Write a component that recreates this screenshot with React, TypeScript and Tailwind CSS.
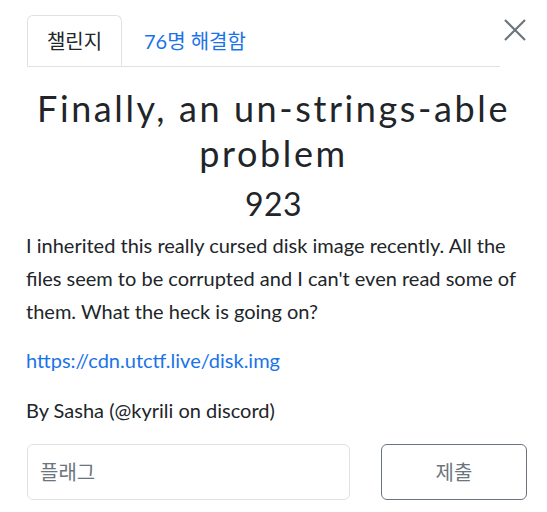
import React from "react";

const font = { fontFamily: "Lato, 'Noto Sans CJK KR', sans-serif" };

export default function App() {
  return (
    <div className="w-[547px] h-[512px] bg-white text-[#212529] overflow-hidden" style={font}>
      {/* Header with tabs */}
      <div className="flex items-start pt-[15px] pl-[27px] pr-[21px]">
        <div className="flex flex-1 border-b border-[#dee2e6]">
          <div className="h-[51px] w-[95px] -mb-px flex items-center justify-center border border-[#dee2e6] border-b-white rounded-t-md bg-white text-[20px] text-[#212529]">
            챌린지
          </div>
          <div className="h-[51px] pl-[22px] flex items-center text-[20px] text-[#1a73e8]">
            76명 해결함
          </div>
        </div>
        <button className="ml-[4px] mt-[4px] w-[22px] h-[22px] flex items-center justify-center text-[#6c757d]">
          <svg width="22" height="22" viewBox="0 0 22 22" fill="none" stroke="currentColor" strokeWidth="2.2">
            <path d="M1 1 L21 21 M21 1 L1 21" />
          </svg>
        </button>
      </div>

      <div className="px-[26px]">
        <h2 className="mt-[19px] -mx-[10px] text-center text-[36px] leading-[45px] tracking-[2.6px] font-normal">
          Finally, an un-strings-able problem
        </h2>
        <h3 className="mt-[9px] text-center text-[32px] leading-[38px] tracking-[0.5px] font-normal">923</h3>

        <div className="mt-[6px] text-[20px] leading-[33px]">
          <p>
            I inherited this really cursed disk image recently. All the files seem to be corrupted and I can't
            even read some of them. What the heck is going on?
          </p>
          <p className="mt-[16px]">
            <a href="#" className="text-[#1a73e8]">https://cdn.utctf.live/disk.img</a>
          </p>
          <p className="mt-[17px]">By Sasha (@kyrili on discord)</p>
        </div>

        <div className="mt-[17px] flex">
          <input
            placeholder="플래그"
            className="shrink-0 ml-px w-[323px] h-[56px] px-[12px] border border-[#dee2e6] rounded-md text-[20px] placeholder:text-[#6c757d] outline-none"
            style={font}
          />
          <button className="shrink-0 ml-[31px] w-[146px] h-[56px] border border-[#6c757d] rounded-md text-[20px] text-[#6c757d]">
            제출
          </button>
        </div>
      </div>
    </div>
  );
}
